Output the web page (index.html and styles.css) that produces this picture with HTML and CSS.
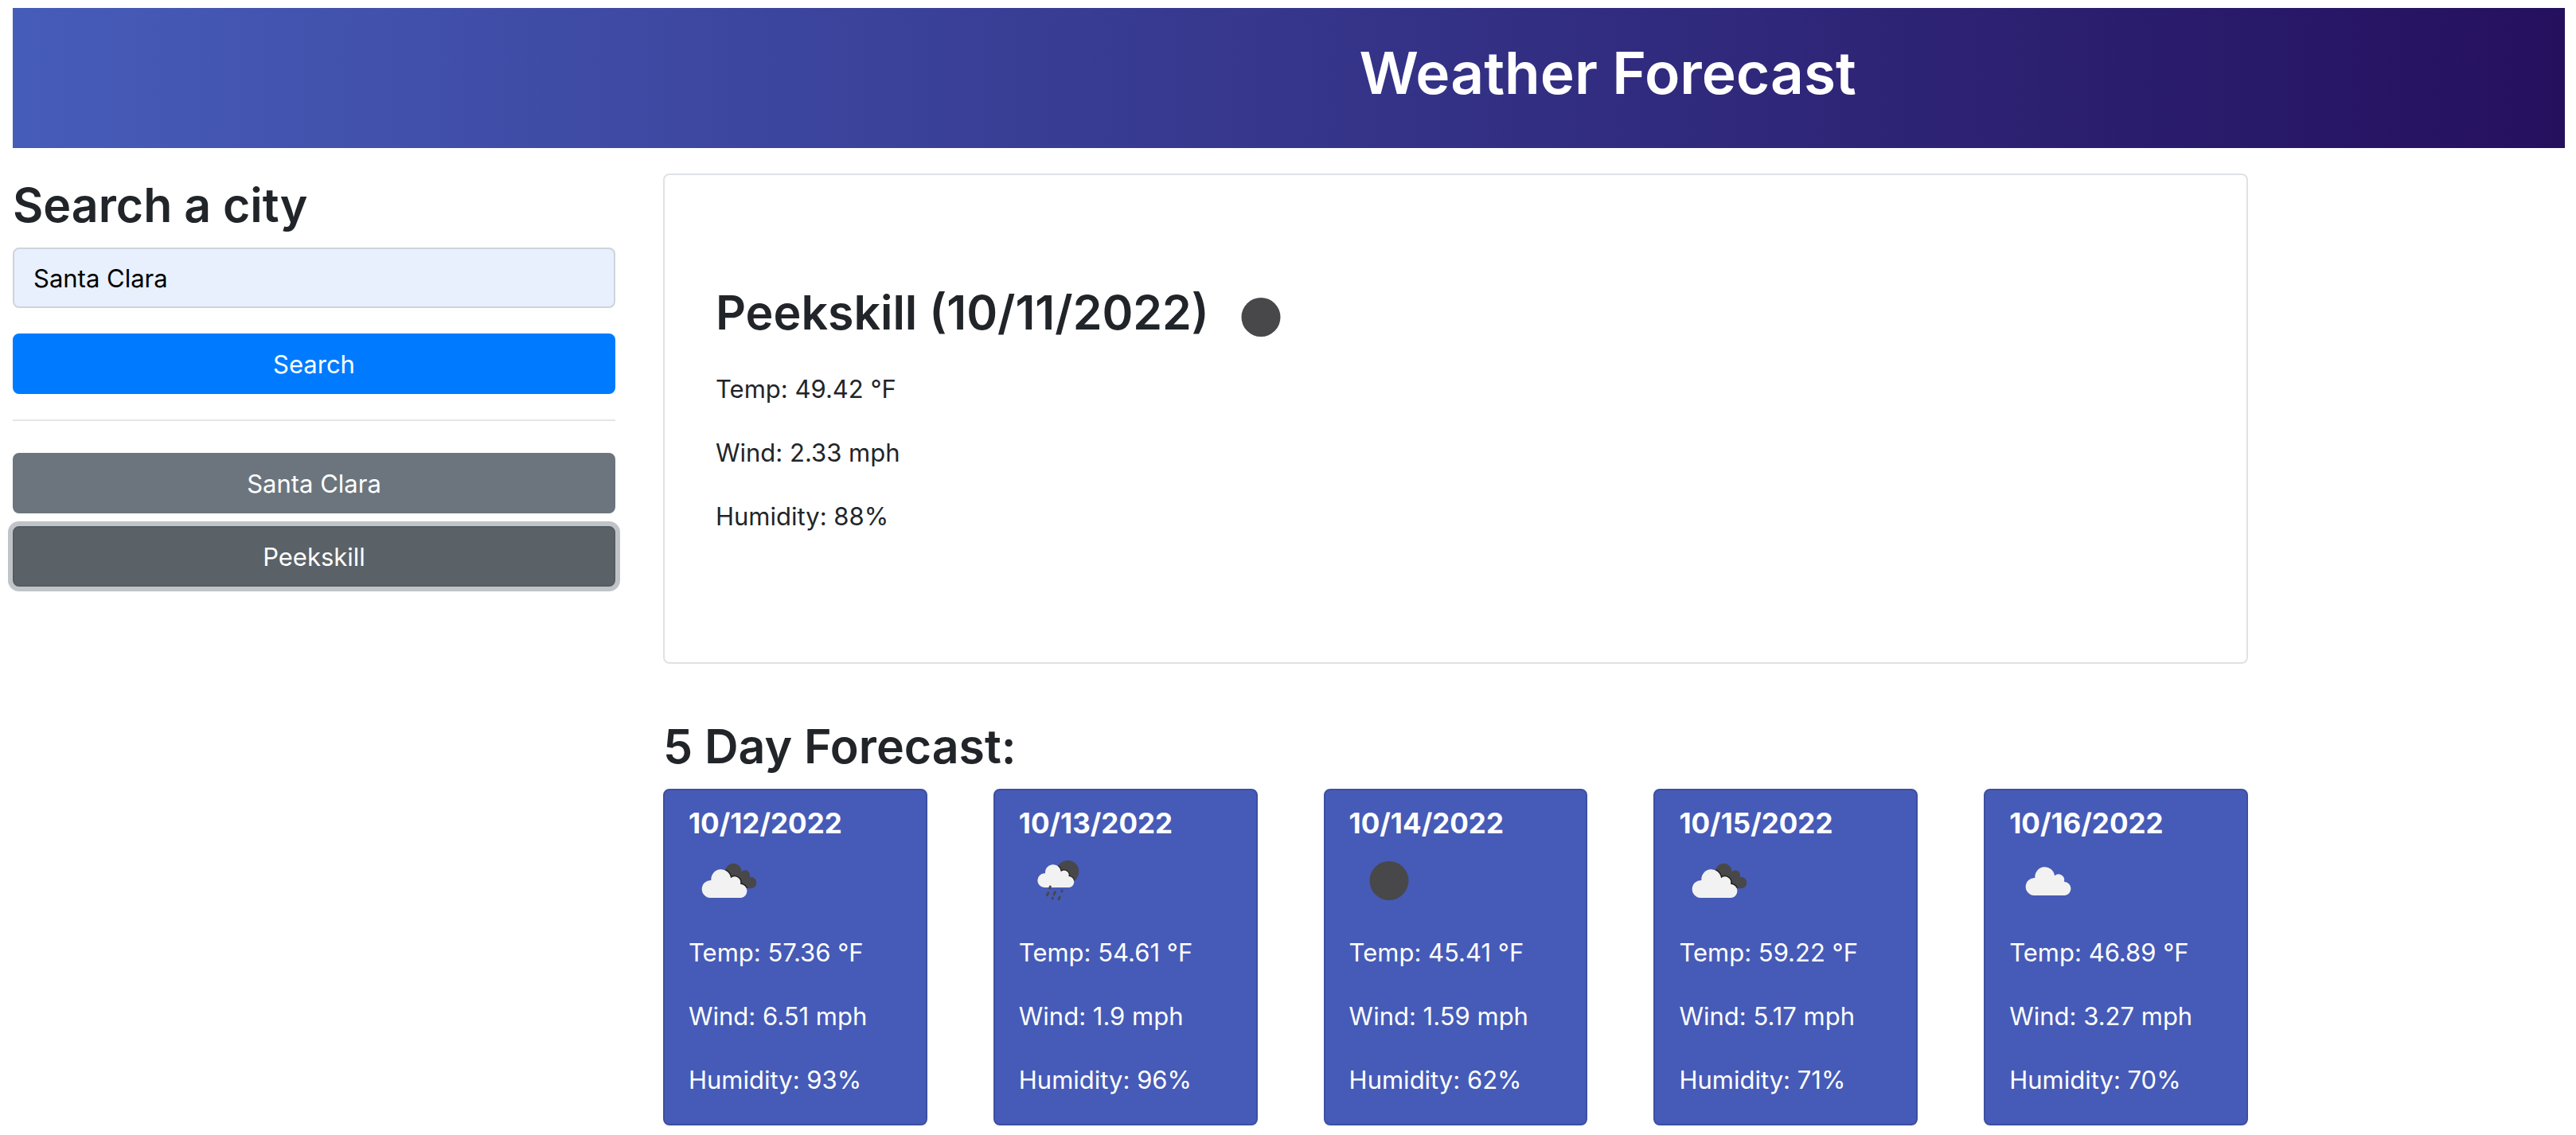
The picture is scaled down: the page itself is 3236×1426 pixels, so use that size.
FILE: index.html
```html
<!DOCTYPE html>
<html lang="en">
<head>
  <meta charset="utf-8">
  <meta name="viewport" content="width=device-width, initial-scale=1">
  <title>Weather Forecast</title>
  <link rel="stylesheet" href="styles.css">
</head>
<body>
  <svg class="sprite" aria-hidden="true">
    <defs>
      <path id="cloud-shape" d="M31 69A11 11 0 0 1 32.4 47A12.3 12.3 0 0 1 57 44.3A7.4 7.4 0 0 1 69 51.7A8.7 8.7 0 0 1 70 69Z"/>
      <clipPath id="back-clouds">
        <circle cx="56.3" cy="39" r="10.3"/>
        <circle cx="71" cy="43.3" r="6"/>
        <circle cx="78" cy="53" r="7.3"/>
        <path d="M56 45L71 40L78 60H60Z"/>
      </clipPath>
      <clipPath id="back-moon"><circle cx="61.3" cy="39" r="14"/></clipPath>
      <symbol id="icon-clear" viewBox="0 0 100 100">
        <circle cx="50" cy="50.5" r="24.5" fill="#48484a"/>
      </symbol>
      <symbol id="icon-cloud" viewBox="0 0 100 100">
        <use href="#cloud-shape" fill="#f2f2f2"/>
      </symbol>
      <symbol id="icon-broken" viewBox="0 0 100 100">
        <g clip-path="url(#back-clouds)">
          <rect width="100" height="100" fill="#48484a"/>
          <use href="#cloud-shape" transform="translate(-4 3)" fill="none" stroke="#222" stroke-width="3"/>
        </g>
        <use href="#cloud-shape" transform="translate(-4 3)" fill="#f2f2f2"/>
      </symbol>
      <symbol id="icon-rain" viewBox="0 0 100 100">
        <g clip-path="url(#back-moon)">
          <rect width="100" height="100" fill="#48484a"/>
          <use href="#cloud-shape" transform="translate(6.6 3.2) scale(.81)" fill="none" stroke="#222" stroke-width="3"/>
        </g>
        <use href="#cloud-shape" transform="translate(6.6 3.2) scale(.81)" fill="#f2f2f2"/>
        <path d="M39.3 58L38.7 60M36.8 65.7L35.5 68.7M45.5 64.7L44 67.7M54.2 63L53.8 64M42.4 72L42 72.8M51.2 71L50 73.7" stroke="#48484a" stroke-width="3" stroke-linecap="round"/>
      </symbol>
    </defs>
  </svg>

  <header class="header">
    <h1 class="title">Weather Forecast</h1>
  </header>

  <div class="layout">
    <aside class="sidebar">
      <form class="search">
        <h2 class="heading"><label for="city">Search a city</label></h2>
        <input class="input" id="city" type="text" value="Santa Clara">
        <button class="btn btn-primary" type="button">Search</button>
      </form>
      <hr class="rule">
      <div class="history">
        <button class="btn" type="button">Santa Clara</button>
        <button class="btn btn-active" type="button">Peekskill</button>
      </div>
    </aside>

    <main class="main">
      <section class="current">
        <h2 class="heading current-heading">Peekskill (10/11/2022)
          <svg class="icon" role="img" aria-label="Clear sky"><use href="#icon-clear"/></svg>
        </h2>
        <p class="stat">Temp: 49.42 °F</p>
        <p class="stat">Wind: 2.33 mph</p>
        <p class="stat">Humidity: 88%</p>
      </section>

      <section>
        <h2 class="heading">5 Day Forecast:</h2>
        <div class="days">
          <article class="day">
            <h3 class="date">10/12/2022</h3>
            <svg class="icon" role="img" aria-label="Broken clouds"><use href="#icon-broken"/></svg>
            <p class="stat">Temp: 57.36 °F</p>
            <p class="stat">Wind: 6.51 mph</p>
            <p class="stat">Humidity: 93%</p>
          </article>
          <article class="day">
            <h3 class="date">10/13/2022</h3>
            <svg class="icon" role="img" aria-label="Rain"><use href="#icon-rain"/></svg>
            <p class="stat">Temp: 54.61 °F</p>
            <p class="stat">Wind: 1.9 mph</p>
            <p class="stat">Humidity: 96%</p>
          </article>
          <article class="day">
            <h3 class="date">10/14/2022</h3>
            <svg class="icon" role="img" aria-label="Clear sky"><use href="#icon-clear"/></svg>
            <p class="stat">Temp: 45.41 °F</p>
            <p class="stat">Wind: 1.59 mph</p>
            <p class="stat">Humidity: 62%</p>
          </article>
          <article class="day">
            <h3 class="date">10/15/2022</h3>
            <svg class="icon" role="img" aria-label="Broken clouds"><use href="#icon-broken"/></svg>
            <p class="stat">Temp: 59.22 °F</p>
            <p class="stat">Wind: 5.17 mph</p>
            <p class="stat">Humidity: 71%</p>
          </article>
          <article class="day">
            <h3 class="date">10/16/2022</h3>
            <svg class="icon" role="img" aria-label="Scattered clouds"><use href="#icon-cloud"/></svg>
            <p class="stat">Temp: 46.89 °F</p>
            <p class="stat">Wind: 3.27 mph</p>
            <p class="stat">Humidity: 70%</p>
          </article>
        </div>
      </section>
    </main>
  </div>
</body>
</html>
```
FILE: styles.css
```css
*,
*::before,
*::after {
  box-sizing: border-box;
}

body {
  margin: 0;
  padding: 10px 14px 0 16px;
  background: #fff;
  color: #212529;
  font-family: Inter, "Liberation Sans", sans-serif;
  font-size: 31px;
  line-height: 50px;
}

.sprite {
  position: absolute;
  width: 0;
  height: 0;
}

.header {
  padding: 34px 0 46px 25%;
  background: linear-gradient(to right, #465cb9, #25105e);
}

.title {
  margin: 0;
  color: #fff;
  font-size: 73px;
  font-weight: 600;
  line-height: 96px;
  text-align: center;
}

.layout {
  display: grid;
  grid-template-columns: 757fr 1991fr 338fr;
  gap: 60px;
  padding-top: 32px;
}

.heading {
  margin: 0 0 13px;
  font-size: 59px;
  font-weight: 600;
  line-height: 80px;
}

.input {
  display: block;
  width: 100%;
  height: 76px;
  margin-bottom: 32px;
  padding: 12px 24px;
  border: 2px solid #ced4da;
  border-radius: 8px;
  background: #e8f0fe;
  color: #000;
  font: inherit;
}

.btn {
  display: block;
  width: 100%;
  height: 76px;
  padding: 12px 24px;
  border: 2px solid #6c757d;
  border-radius: 8px;
  background: #6c757d;
  color: #fff;
  font: inherit;
  text-align: center;
}

.btn-primary {
  border-color: #007bff;
  background: #007bff;
}

.btn-active {
  border-color: #545b62;
  background: #5a6268;
  box-shadow: 0 0 0 6px rgba(130, 138, 145, .5);
}

.rule {
  height: 2px;
  margin: 32px 0 40px;
  border: 0;
  background: #e5e5e5;
}

.history {
  display: grid;
  gap: 16px;
}

.current {
  margin-bottom: 64px;
  padding: 128px 64px;
  border: 2px solid #dee2e6;
  border-radius: 8px;
}

.current-heading {
  margin-bottom: 16px;
}

.icon {
  width: 100px;
  height: 100px;
  vertical-align: middle;
}

.stat {
  margin: 0 0 30px;
}

.days {
  display: grid;
  grid-template-columns: repeat(5, 1fr);
  gap: 83px;
}

.day {
  padding: 20px 30px 0;
  border: 2px solid #3d4fa1;
  border-radius: 8px;
  background: #465bb7;
  color: #fff;
}

.date {
  margin: 0;
  font-size: 35px;
  font-weight: 700;
  line-height: 43px;
}

.day .icon {
  display: block;
  margin-bottom: 16px;
}
```
